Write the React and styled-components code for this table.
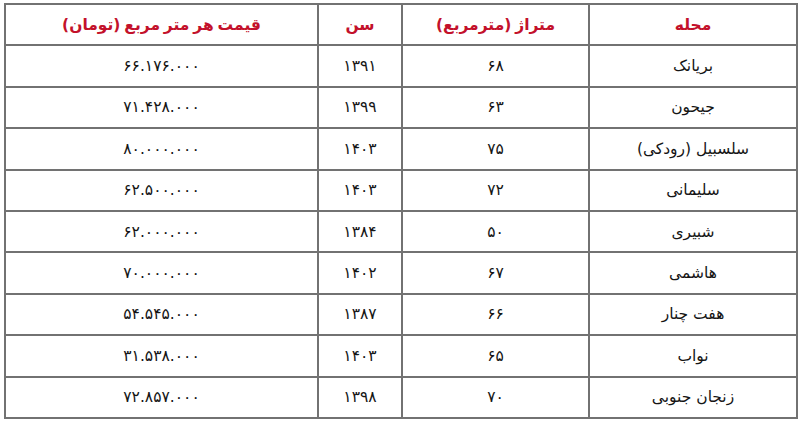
import React from "react";
import styled, { createGlobalStyle } from "styled-components";

const Global = createGlobalStyle`
  html, body { margin: 0; padding: 0; background: #ffffff; }
  body { font-family: "DejaVu Sans", "Noto Sans", sans-serif; }
`;

const Page = styled.div`
  width: 800px;
  height: 426px;
  box-sizing: border-box;
  padding: 3px 4px 0 4px;
  background: #fff;
`;

const Table = styled.table`
  direction: rtl;
  width: 792px;
  border-collapse: collapse;
  table-layout: fixed;
  font-family: "DejaVu Sans", "Noto Sans", sans-serif;
`;

const Cell = styled.td`
  border: 2px solid #727272;
  height: 41.4px;
  padding: 0;
  box-sizing: border-box;
  text-align: center;
  vertical-align: middle;
  font-size: 15.5px;
  color: #151515;
  white-space: nowrap;
`;

const HeadCell = styled(Cell).attrs({ as: "th" })`
  color: #c3112b;
  font-weight: bold;
  font-size: 15.5px;
  word-spacing: -1.5px;
`;

const fa = (s) => String(s).replace(/[0-9]/g, (d) => "۰۱۲۳۴۵۶۷۸۹"[d]);

const widths = [208, 187, 84, 313];
const headers = ["محله", "متراژ (مترمربع)", "سن", "قیمت هر متر مربع (تومان)"];
const rows = [
  ["بریانک", "68", "1391", "66.176.000"],
  ["جیحون", "63", "1399", "71.428.000"],
  ["سلسبیل (رودکی)", "75", "1403", "80.000.000"],
  ["سلیمانی", "72", "1403", "62.500.000"],
  ["شبیری", "50", "1384", "62.000.000"],
  ["هاشمی", "67", "1402", "70.000.000"],
  ["هفت چنار", "66", "1387", "54.545.000"],
  ["نواب", "65", "1403", "31.538.000"],
  ["زنجان جنوبی", "70", "1398", "72.857.000"],
];

export default function App() {
  return (
    <Page>
      <Global />
      <Table>
        <colgroup>
          {widths.map((w, i) => (
            <col key={i} style={{ width: w }} />
          ))}
        </colgroup>
        <thead>
          <tr>
            {headers.map((h) => (
              <HeadCell key={h}>{h}</HeadCell>
            ))}
          </tr>
        </thead>
        <tbody>
          {rows.map((r) => (
            <tr key={r[0]}>
              <Cell>{r[0]}</Cell>
              <Cell>{fa(r[1])}</Cell>
              <Cell>{fa(r[2])}</Cell>
              <Cell dir="ltr">{fa(r[3])}</Cell>
            </tr>
          ))}
        </tbody>
      </Table>
    </Page>
  );
}
